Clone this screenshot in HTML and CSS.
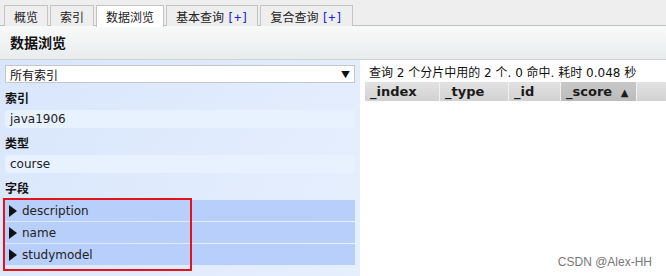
FILE: index.html
```html
<!doctype html>
<html>
<head>
	<meta charset="utf-8" />
	<title>数据浏览</title>
	<link rel="stylesheet" href="styles.css">
</head>
<body>
	<div class="tabbar">
		<div class="tab">概览</div>
		<div class="tab">索引</div>
		<div class="tab active">数据浏览</div>
		<div class="tab">基本查询 <span class="plus">[+]</span></div>
		<div class="tab">复合查询 <span class="plus">[+]</span></div>
	</div>
	<div class="header">数据浏览</div>
	<div class="main">
		<div class="side">
			<div class="select">
				<span>所有索引</span>
				<span class="arrow">▼</span>
			</div>
			<div class="label">索引</div>
			<div class="value">java1906</div>
			<div class="label">类型</div>
			<div class="value">course</div>
			<div class="label">字段</div>
			<div class="fields">
				<div class="field"><span class="tri"></span>description</div>
				<div class="field"><span class="tri"></span>name</div>
				<div class="field"><span class="tri"></span>studymodel</div>
				<div class="mark"></div>
			</div>
		</div>
		<div class="results">
			<div class="summary">查询 2 个分片中用的 2 个. 0 命中. 耗时 0.048 秒</div>
			<div class="thead">
				<div class="th c-index">_index</div>
				<div class="th c-type">_type</div>
				<div class="th c-id">_id</div>
				<div class="th c-score sorted">_score <span class="up">▲</span></div>
				<div class="th c-rest"></div>
			</div>
		</div>
	</div>
	<div class="watermark">CSDN @Alex-HH</div>
</body>
</html>
```

FILE: styles.css
```css
body
{
	margin: 0;
	font-family: "DejaVu Sans", "Noto Sans CJK SC", sans-serif;
	font-size: 12px;
	color: #111;
	background: #fff;
	height: 276px;
	overflow: hidden;
	position: relative;
}

.tabbar
{
	display: flex;
	gap: 2px;
	padding: 5px 0 0 4px;
	height: 20px;
	background: #eeeeee;
	border-bottom: 1px solid #c0c0c0;
}

.tab
{
	height: 20px;
	line-height: 22px;
	padding: 0 9px;
	border: 1px solid #c4c4c4;
	border-bottom: none;
	font-family: "Noto Sans CJK SC", sans-serif;
	font-size: 12px;
	color: #222;
	background: #eeeeee;
	min-width: 22px;
	text-align: center;
}

.tab.active
{
	background: #fff;
	height: 21px;
	margin-bottom: -1px;
}

.plus
{
	color: #2020e0;
	font-family: "DejaVu Sans Mono", monospace;
	font-size: 12px;
}

.header
{
	height: 33px;
	line-height: 33px;
	padding-left: 10px;
	font-family: "Noto Sans CJK SC", sans-serif;
	font-size: 14px;
	font-weight: bold;
	background: linear-gradient(#f8fafa, #e9eced);
	border-bottom: 1px solid #cfd2d4;
}

.main
{
	display: flex;
	height: 216px;
}

.side
{
	width: 350px;
	padding: 5px 5px 0 5px;
	background: linear-gradient(120deg, #d9e6fc, #e6effd);
}

.select
{
	display: flex;
	justify-content: space-between;
	align-items: center;
	height: 16px;
	padding: 0 4px 0 4px;
	background: #fff;
	border: 1px solid #c6c6c6;
	font-family: "Noto Sans CJK SC", sans-serif;
	font-size: 12px;
}

.arrow
{
	font-size: 9px;
	color: #111;
}

.label
{
	height: 17px;
	line-height: 17px;
	margin-top: 6px;
	margin-bottom: 4px;
	font-family: "Noto Sans CJK SC", sans-serif;
	font-weight: bold;
	font-size: 12px;
}

.value
{
	height: 18px;
	line-height: 18px;
	padding-left: 5px;
	border-radius: 4px;
	background: #e8f1fe;
	color: #222;
}

.fields
{
	position: relative;
	display: flex;
	flex-direction: column;
	gap: 1px;
}

.field
{
	display: flex;
	align-items: center;
	height: 21px;
	background: #b8cffb;
	color: #222;
}

.tri
{
	width: 0;
	height: 0;
	margin: 0 5px 0 4px;
	border-top: 6px solid transparent;
	border-bottom: 6px solid transparent;
	border-left: 8px solid #111;
}

.mark
{
	position: absolute;
	left: -2px;
	top: -2px;
	width: 185px;
	height: 69px;
	border: 2px solid #e4131b;
}

.results
{
	flex: 1;
	padding: 6px 0 0 5px;
}

.summary
{
	padding-left: 4px;
	height: 16px;
	line-height: 14px;
	font-size: 12px;
	color: #111;
}

.thead
{
	display: flex;
	height: 19px;
}

.th
{
	height: 19px;
	line-height: 19px;
	padding-left: 5px;
	font-weight: bold;
	font-size: 13px;
	color: #1a1a1a;
	background: linear-gradient(#e2e2e2, #d2d2d2);
	border-right: 1px solid #f0f0f0;
	box-sizing: border-box;
}

.c-index { width: 75px; }
.c-type { width: 69px; }
.c-id { width: 52px; }
.c-score { width: 76px; }
.c-rest { flex: 1; border-right: none; }

.th.sorted
{
	background: linear-gradient(#c8c8c8, #bcbcbc);
}

.up
{
	font-size: 10px;
	margin-left: 4px;
}

.watermark
{
	position: absolute;
	right: 14px;
	bottom: 7px;
	font-family: "Liberation Sans", sans-serif;
	font-size: 12px;
	color: #777;
}
```
